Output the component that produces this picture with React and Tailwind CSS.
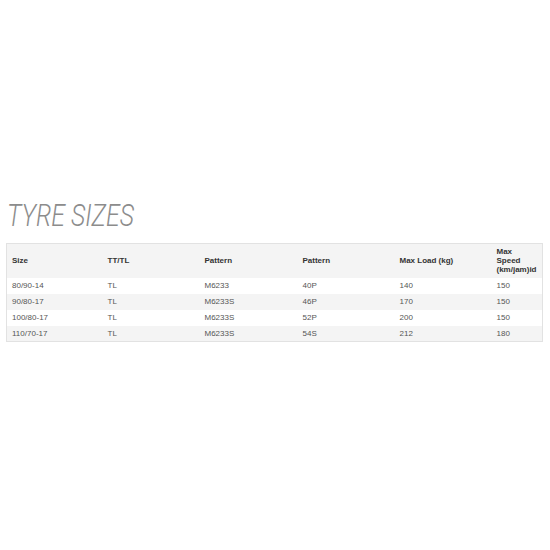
export default function App() {
  const rows = [
    ["80/90-14", "TL", "M6233", "40P", "140", "150"],
    ["90/80-17", "TL", "M6233S", "46P", "170", "150"],
    ["100/80-17", "TL", "M6233S", "52P", "200", "150"],
    ["110/70-17", "TL", "M6233S", "54S", "212", "180"],
  ];
  return (
    <div className="w-[550px] h-[550px] bg-white pt-[198px] px-[6px]" style={{ fontFamily: '"Liberation Sans", Arial, sans-serif' }}>
      <h2 className="ml-[1px] text-[31px] leading-[36px] italic font-light text-[#8c8c8c] origin-left scale-x-[0.8] whitespace-nowrap" style={{ fontFamily: 'Roboto, "Liberation Sans", sans-serif' }}>
        TYRE SIZES
      </h2>
      <table className="mt-[9px] w-[537px] table-fixed border-collapse border border-[#e2e2e2] text-[8px] text-[#555]">
        <colgroup>
          <col className="w-[96px]" />
          <col className="w-[97px]" />
          <col className="w-[98px]" />
          <col className="w-[97px]" />
          <col className="w-[97px]" />
          <col />
        </colgroup>
        <thead>
          <tr className="bg-[#f4f4f4] h-[34px] text-left font-bold text-[#333]">
            <th className="pl-[5px] align-middle leading-[9px]">Size</th>
            <th className="pl-[5px] align-middle leading-[9px]">TT/TL</th>
            <th className="pl-[5px] align-middle leading-[9px]">Pattern</th>
            <th className="pl-[5px] align-middle leading-[9px]">Pattern</th>
            <th className="pl-[5px] align-middle leading-[9px]">Max Load (kg)</th>
            <th className="pl-[5px] align-middle leading-[9px]">Max<br />Speed<br />(km/jam)id</th>
          </tr>
        </thead>
        <tbody>
          {rows.map((r, i) => (
            <tr key={i} className={i % 2 === 1 ? "bg-[#f4f4f4] h-[16px]" : "bg-white h-[16px]"}>
              {r.map((c, j) => (
                <td key={j} className="pl-[5px] leading-[9px] align-middle">{c}</td>
              ))}
            </tr>
          ))}
        </tbody>
      </table>
    </div>
  );
}
